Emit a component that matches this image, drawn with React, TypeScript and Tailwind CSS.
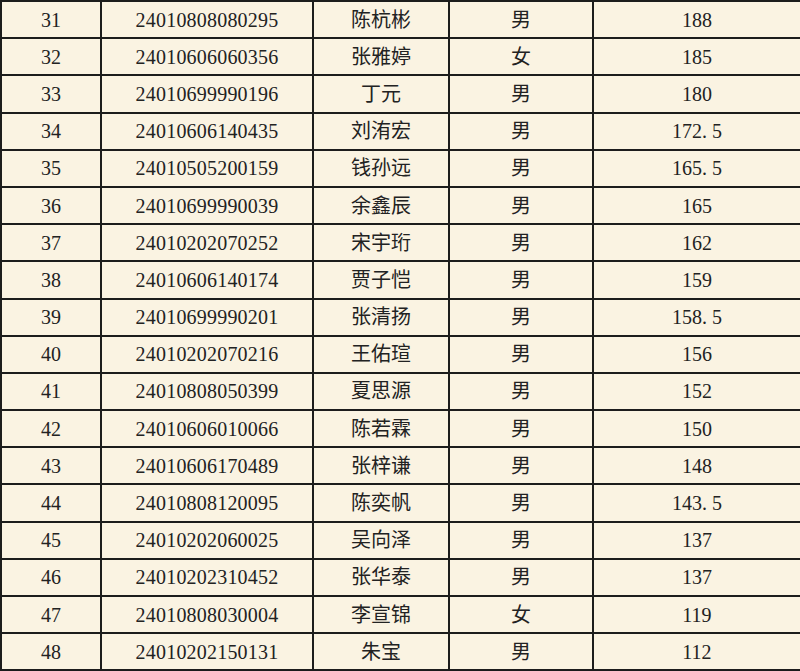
import React from "react";

const rows: [string, string, string, string, string][] = [
  ["31", "24010808080295", "陈杭彬", "男", "188"],
  ["32", "24010606060356", "张雅婷", "女", "185"],
  ["33", "24010699990196", "丁元", "男", "180"],
  ["34", "24010606140435", "刘洧宏", "男", "172.5"],
  ["35", "24010505200159", "钱孙远", "男", "165.5"],
  ["36", "24010699990039", "余鑫辰", "男", "165"],
  ["37", "24010202070252", "宋宇珩", "男", "162"],
  ["38", "24010606140174", "贾子恺", "男", "159"],
  ["39", "24010699990201", "张清扬", "男", "158.5"],
  ["40", "24010202070216", "王佑瑄", "男", "156"],
  ["41", "24010808050399", "夏思源", "男", "152"],
  ["42", "24010606010066", "陈若霖", "男", "150"],
  ["43", "24010606170489", "张梓谦", "男", "148"],
  ["44", "24010808120095", "陈奕帆", "男", "143.5"],
  ["45", "24010202060025", "吴向泽", "男", "137"],
  ["46", "24010202310452", "张华泰", "男", "137"],
  ["47", "24010808030004", "李宣锦", "女", "119"],
  ["48", "24010202150131", "朱宝", "男", "112"],
];

const cell = "border-2 border-[#1c1c1c] text-center align-middle p-0 leading-none";

// decimals in the source font sit with a wide gap after the point
const Score = ({ v }: { v: string }) => {
  const [a, b] = v.split(".");
  if (b === undefined) return <>{v}</>;
  return (
    <>
      {a}
      <span className="mr-[5px]">.</span>
      {b}
    </>
  );
};

const App = () => {
  return (
    <div className="w-[800px] h-[671px] bg-[#faf3e2] overflow-hidden">
      <table
        className="w-[800px] table-fixed border-collapse text-[20px] text-[#222]"
        style={{ fontFamily: '"Liberation Serif", "Noto Sans CJK SC", serif' }}
      >
        <colgroup>
          <col className="w-[100px]" />
          <col className="w-[212px]" />
          <col className="w-[136px]" />
          <col className="w-[144px]" />
          <col className="w-[208px]" />
        </colgroup>
        <tbody>
          {rows.map((r) => (
            <tr key={r[0]} className="h-[37.2px]">
              <td className={cell}>{r[0]}</td>
              <td className={`${cell} tracking-[0.2px]`}>{r[1]}</td>
              <td className={cell}>{r[2]}</td>
              <td className={cell}>{r[3]}</td>
              <td className={cell}>
                <Score v={r[4]} />
              </td>
            </tr>
          ))}
        </tbody>
      </table>
    </div>
  );
};

export default App;
